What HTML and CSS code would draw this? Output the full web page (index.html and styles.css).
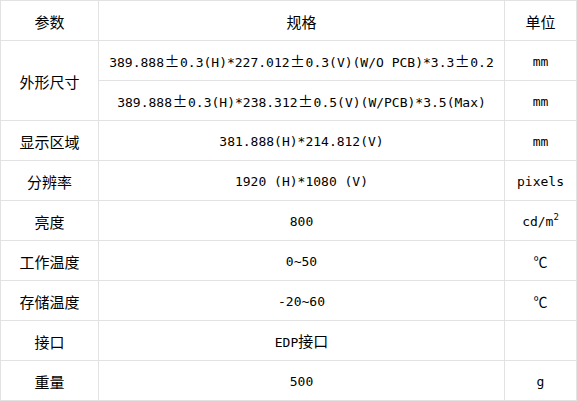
FILE: index.html
```html
<!DOCTYPE html>
<html lang="zh-CN">
<head>
<meta charset="utf-8">
<title>参数表</title>
<link rel="stylesheet" href="styles.css">
</head>
<body>
<table class="spec">
  <colgroup>
    <col class="c-name">
    <col class="c-val">
    <col class="c-unit">
  </colgroup>
  <tr>
    <td class="cjk">参数</td>
    <td class="cjk">规格</td>
    <td class="cjk">单位</td>
  </tr>
  <tr>
    <td class="cjk" rowspan="2">外形尺寸</td>
    <td>389.888<span class="pm">±</span>0.3(H)*227.012<span class="pm">±</span>0.3(V)(W/O PCB)*3.3<span class="pm">±</span>0.2</td>
    <td>mm</td>
  </tr>
  <tr>
    <td>389.888<span class="pm">±</span>0.3(H)*238.312<span class="pm">±</span>0.5(V)(W/PCB)*3.5(Max)</td>
    <td>mm</td>
  </tr>
  <tr>
    <td class="cjk">显示区域</td>
    <td>381.888(H)*214.812(V)</td>
    <td>mm</td>
  </tr>
  <tr>
    <td class="cjk">分辨率</td>
    <td>1920 (H)*1080 (V)</td>
    <td>pixels</td>
  </tr>
  <tr>
    <td class="cjk">亮度</td>
    <td>800</td>
    <td>cd/m<sup>2</sup></td>
  </tr>
  <tr>
    <td class="cjk">工作温度</td>
    <td>0~50</td>
    <td><span class="deg">℃</span></td>
  </tr>
  <tr>
    <td class="cjk">存储温度</td>
    <td>-20~60</td>
    <td><span class="deg">℃</span></td>
  </tr>
  <tr>
    <td class="cjk">接口</td>
    <td>EDP<span class="cjk-in">接口</span></td>
    <td></td>
  </tr>
  <tr>
    <td class="cjk">重量</td>
    <td>500</td>
    <td>g</td>
  </tr>
</table>
</body>
</html>
```

FILE: styles.css
```css
html, body {
  margin: 0;
  padding: 0;
  background: #ffffff;
}

.spec {
  border-collapse: collapse;
  table-layout: fixed;
  width: 576px;
  color: #000000;
  font-family: "DejaVu Sans Mono", "Noto Sans CJK SC", monospace;
  font-size: 13px;
}

.c-name { width: 98px; }
.c-val { width: 406px; }
.c-unit { width: 72px; }

.spec td {
  border: 1px solid #e2e2e2;
  height: 40px;
  padding: 3px 0 0 0;
  box-sizing: border-box;
  text-align: center;
  vertical-align: middle;
  white-space: nowrap;
  line-height: 16px;
}

.spec td.cjk {
  font-family: "Noto Sans CJK SC", sans-serif;
  font-size: 15px;
}

.cjk-in {
  font-family: "Noto Sans CJK SC", sans-serif;
  font-size: 15px;
}

.pm {
  display: inline-block;
  width: 16px;
  text-align: center;
  font-family: "Noto Sans CJK SC", sans-serif;
  font-size: 15px;
}

.deg {
  font-family: "Noto Sans CJK SC", sans-serif;
  font-size: 14px;
}

sup {
  font-size: 9px;
  line-height: 0;
  vertical-align: 6px;
}
```
